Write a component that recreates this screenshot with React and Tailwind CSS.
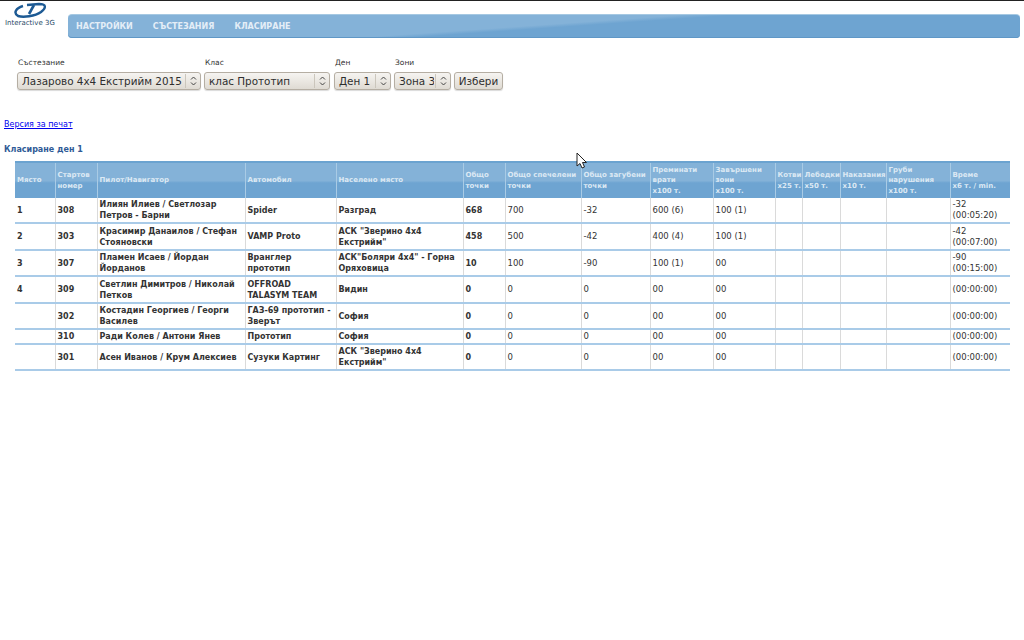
import React from "react";

const widths = [40, 42, 148, 91, 127, 42, 76, 69, 63, 62, 27, 38, 46, 64, 60];
const head = [
  ["Място"], ["Стартов", "номер"], ["Пилот/Навигатор"], ["Автомобил"], ["Населено място"],
  ["Общо", "точки"], ["Общо спечелени", "точки"], ["Общо загубени", "точки"],
  ["Преминати", "врати", "x100 т."], ["Завършени", "зони", "x100 т."],
  ["Котви", "x25 т."], ["Лебедки", "x50 т."], ["Наказания", "x10 т."],
  ["Груби", "нарушения", "x100 т."], ["Време", "x6 т. / min."],
];
const rows = [
  { h: 25, c: ["1", "308", "Илиян Илиев / Светлозар Петров - Барни", "Spider", "Разград", "668", "700", "-32", "600 (6)", "100 (1)", "-32 (00:05:20)"] },
  { h: 27, c: ["2", "303", "Красимир Данаилов / Стефан Стояновски", "VAMP Proto", 'АСК "Зверино 4x4 Екстрийм"', "458", "500", "-42", "400 (4)", "100 (1)", "-42 (00:07:00)"] },
  { h: 26, c: ["3", "307", "Пламен Исаев / Йордан Йорданов", "Вранглер прототип", 'АСК"Боляри 4x4" - Горна Оряховица', "10", "100", "-90", "100 (1)", "00", "-90 (00:15:00)"] },
  { h: 27, c: ["4", "309", "Светлин Димитров / Николай Петков", "OFFROAD TALASYM TEAM", "Видин", "0", "0", "0", "00", "00", "(00:00:00)"] },
  { h: 26, c: ["", "302", "Костадин Георгиев / Георги Василев", "ГАЗ-69 прототип - Зверът", "София", "0", "0", "0", "00", "00", "(00:00:00)"] },
  { h: 15, c: ["", "310", "Ради Колев / Антони Янев", "Прототип", "София", "0", "0", "0", "00", "00", "(00:00:00)"] },
  { h: 26, c: ["", "301", "Асен Иванов / Крум Алексиев", "Сузуки Картинг", 'АСК "Зверино 4x4 Екстрийм"', "0", "0", "0", "00", "00", "(00:00:00)"] },
];

function Picker({ label, value, w, gap }) {
  return (
    <div className="flex flex-col" style={{ width: w, marginRight: gap }}>
      <span className="h-[15px] pl-px text-[7.5px] leading-[11px] text-[#333]">{label}</span>
      <div className="relative h-[18px] w-full">
        <select
          defaultValue={value}
          className="block h-full w-full appearance-none rounded-[3px] border border-[#b5aea3] bg-gradient-to-b from-[#f6f4f1] to-[#dfdbd3] pl-[4px] pr-[16px] text-[10.4px] leading-[16px] text-[#2e2e2e] shadow-[0_1px_1px_rgba(0,0,0,0.15)] outline-none"
        >
          <option>{value}</option>
        </select>
        <span className="pointer-events-none absolute right-0 top-[2px] flex h-[14px] w-[16px] items-center justify-center border-l border-[#cbc6bc]">
          <svg width="7" height="10" viewBox="0 0 7 10" fill="none" stroke="#444" strokeWidth="1">
            <path d="M1 3.5 L3.5 1 L6 3.5" />
            <path d="M1 6.5 L3.5 9 L6 6.5" />
          </svg>
        </span>
      </div>
    </div>
  );
}

export default function App() {
  return (
    <div className="relative h-[640px] w-[1024px] overflow-hidden bg-white font-['DejaVu_Sans',sans-serif]">
      <div className="h-px bg-[#222]" />

      <div className="flex h-[37px] items-start">
        <div className="relative h-[28px] w-[68px] shrink-0">
          <svg className="absolute left-[13px] top-[1px]" width="36" height="17" viewBox="0 0 36 17">
            <path d="M10 4 C 3 6, 0 11, 5 14 C 10 15.5, 22 14.5, 28 10 C 33 6, 34 2, 26 2 L 14 3" fill="none" stroke="#1d5a94" strokeWidth="2.4" />
            <path d="M21 3 L16 12" fill="none" stroke="#1d5a94" strokeWidth="2.6" />
          </svg>
          <span className="absolute left-[5px] top-[17px] whitespace-nowrap text-[7px] leading-[10px] text-[#2a4a68]">Interactive 3G</span>
        </div>
        <nav className="mt-[13px] flex h-[24px] w-[952px] items-center gap-[20px] rounded-[4px] border-t border-[#a5c8e2] bg-[linear-gradient(176deg,#84b2d8_0%,#84b2d8_48%,#6ea4d1_52%,#6ea4d1_100%)] pl-[8px] text-[8px] font-bold text-[#e4eef7] shadow-[inset_0_-1px_0_#5f97c6]">
          <span>НАСТРОЙКИ</span>
          <span>СЪСТЕЗАНИЯ</span>
          <span>КЛАСИРАНЕ</span>
        </nav>
      </div>

      <div className="mt-[19px] flex items-start pl-[17px]">
        <Picker label="Състезание" value="Лазарово 4x4 Екстрийм 2015" w={184} gap={3} />
        <Picker label="Клас" value="клас Прототип" w={126} gap={4} />
        <Picker label="Ден" value="Ден 1" w={57} gap={3} />
        <Picker label="Зони" value="Зона 3" w={57} gap={3} />
        <button className="mt-[15px] h-[18px] w-[49px] rounded-[3px] border border-[#b5aea3] bg-gradient-to-b from-[#f6f4f1] to-[#dfdbd3] text-[10.4px] leading-[16px] text-[#2e2e2e] shadow-[0_1px_1px_rgba(0,0,0,0.15)]">
          Избери
        </button>
      </div>

      <div className="mt-[29px] pl-[4px] text-[8px] leading-[12px]">
        <a href="#" className="text-[#0000ee] underline">Версия за печат</a>
      </div>
      <div className="mt-[13px] pl-[4px] text-[8px] font-bold leading-[12px] text-[#2f5a96]">Класиране ден 1</div>

      <table className="ml-[15px] mt-[5px] w-[995px] table-fixed border-collapse text-[8.5px] leading-[11px] text-[#333]">
        <colgroup>
          {widths.map((w, i) => (
            <col key={i} style={{ width: w }} />
          ))}
        </colgroup>
        <thead>
          <tr className="h-[36px] bg-[linear-gradient(180deg,#84b2d8_0%,#84b2d8_52%,#6ea4d1_58%,#6ea4d1_100%)]">
            {head.map((lines, i) => (
              <th key={i} className="overflow-hidden whitespace-nowrap border-l border-t-2 border-[#6ba3d0] border-l-[#a9cbe5] px-[2px] text-left align-middle text-[7px] font-bold leading-[10.5px] text-[#dce9f4] first:border-l-0">
                {lines.map((l, j) => (
                  <div key={j}>{l}</div>
                ))}
              </th>
            ))}
          </tr>
        </thead>
        <tbody>
          {rows.map((r, idx) => (
            <tr key={idx} className="border-b-2 border-[#a9cbe8]" style={{ height: r.h }}>
              {r.c.slice(0, 10).map((t, i) => (
                <td key={i} className={`border-l border-[#dadada] px-[2px] align-middle first:border-l-0 ${i < 6 ? "text-[8px] font-bold" : "font-normal"}`}>
                  {t}
                </td>
              ))}
              <td className="border-l border-[#dadada]" />
              <td className="border-l border-[#dadada]" />
              <td className="border-l border-[#dadada]" />
              <td className="border-l border-[#dadada]" />
              <td className="border-l border-[#dadada] px-[2px] align-middle">{r.c[10]}</td>
            </tr>
          ))}
        </tbody>
      </table>

      <svg className="absolute left-[576px] top-[152px]" width="12" height="18" viewBox="0 0 12 18">
        <path d="M1 1 L1 14 L4 11.5 L6 16 L8.5 15 L6.5 10.5 L10.5 10.5 Z" fill="#fff" stroke="#222" strokeWidth="1" />
      </svg>
    </div>
  );
}
